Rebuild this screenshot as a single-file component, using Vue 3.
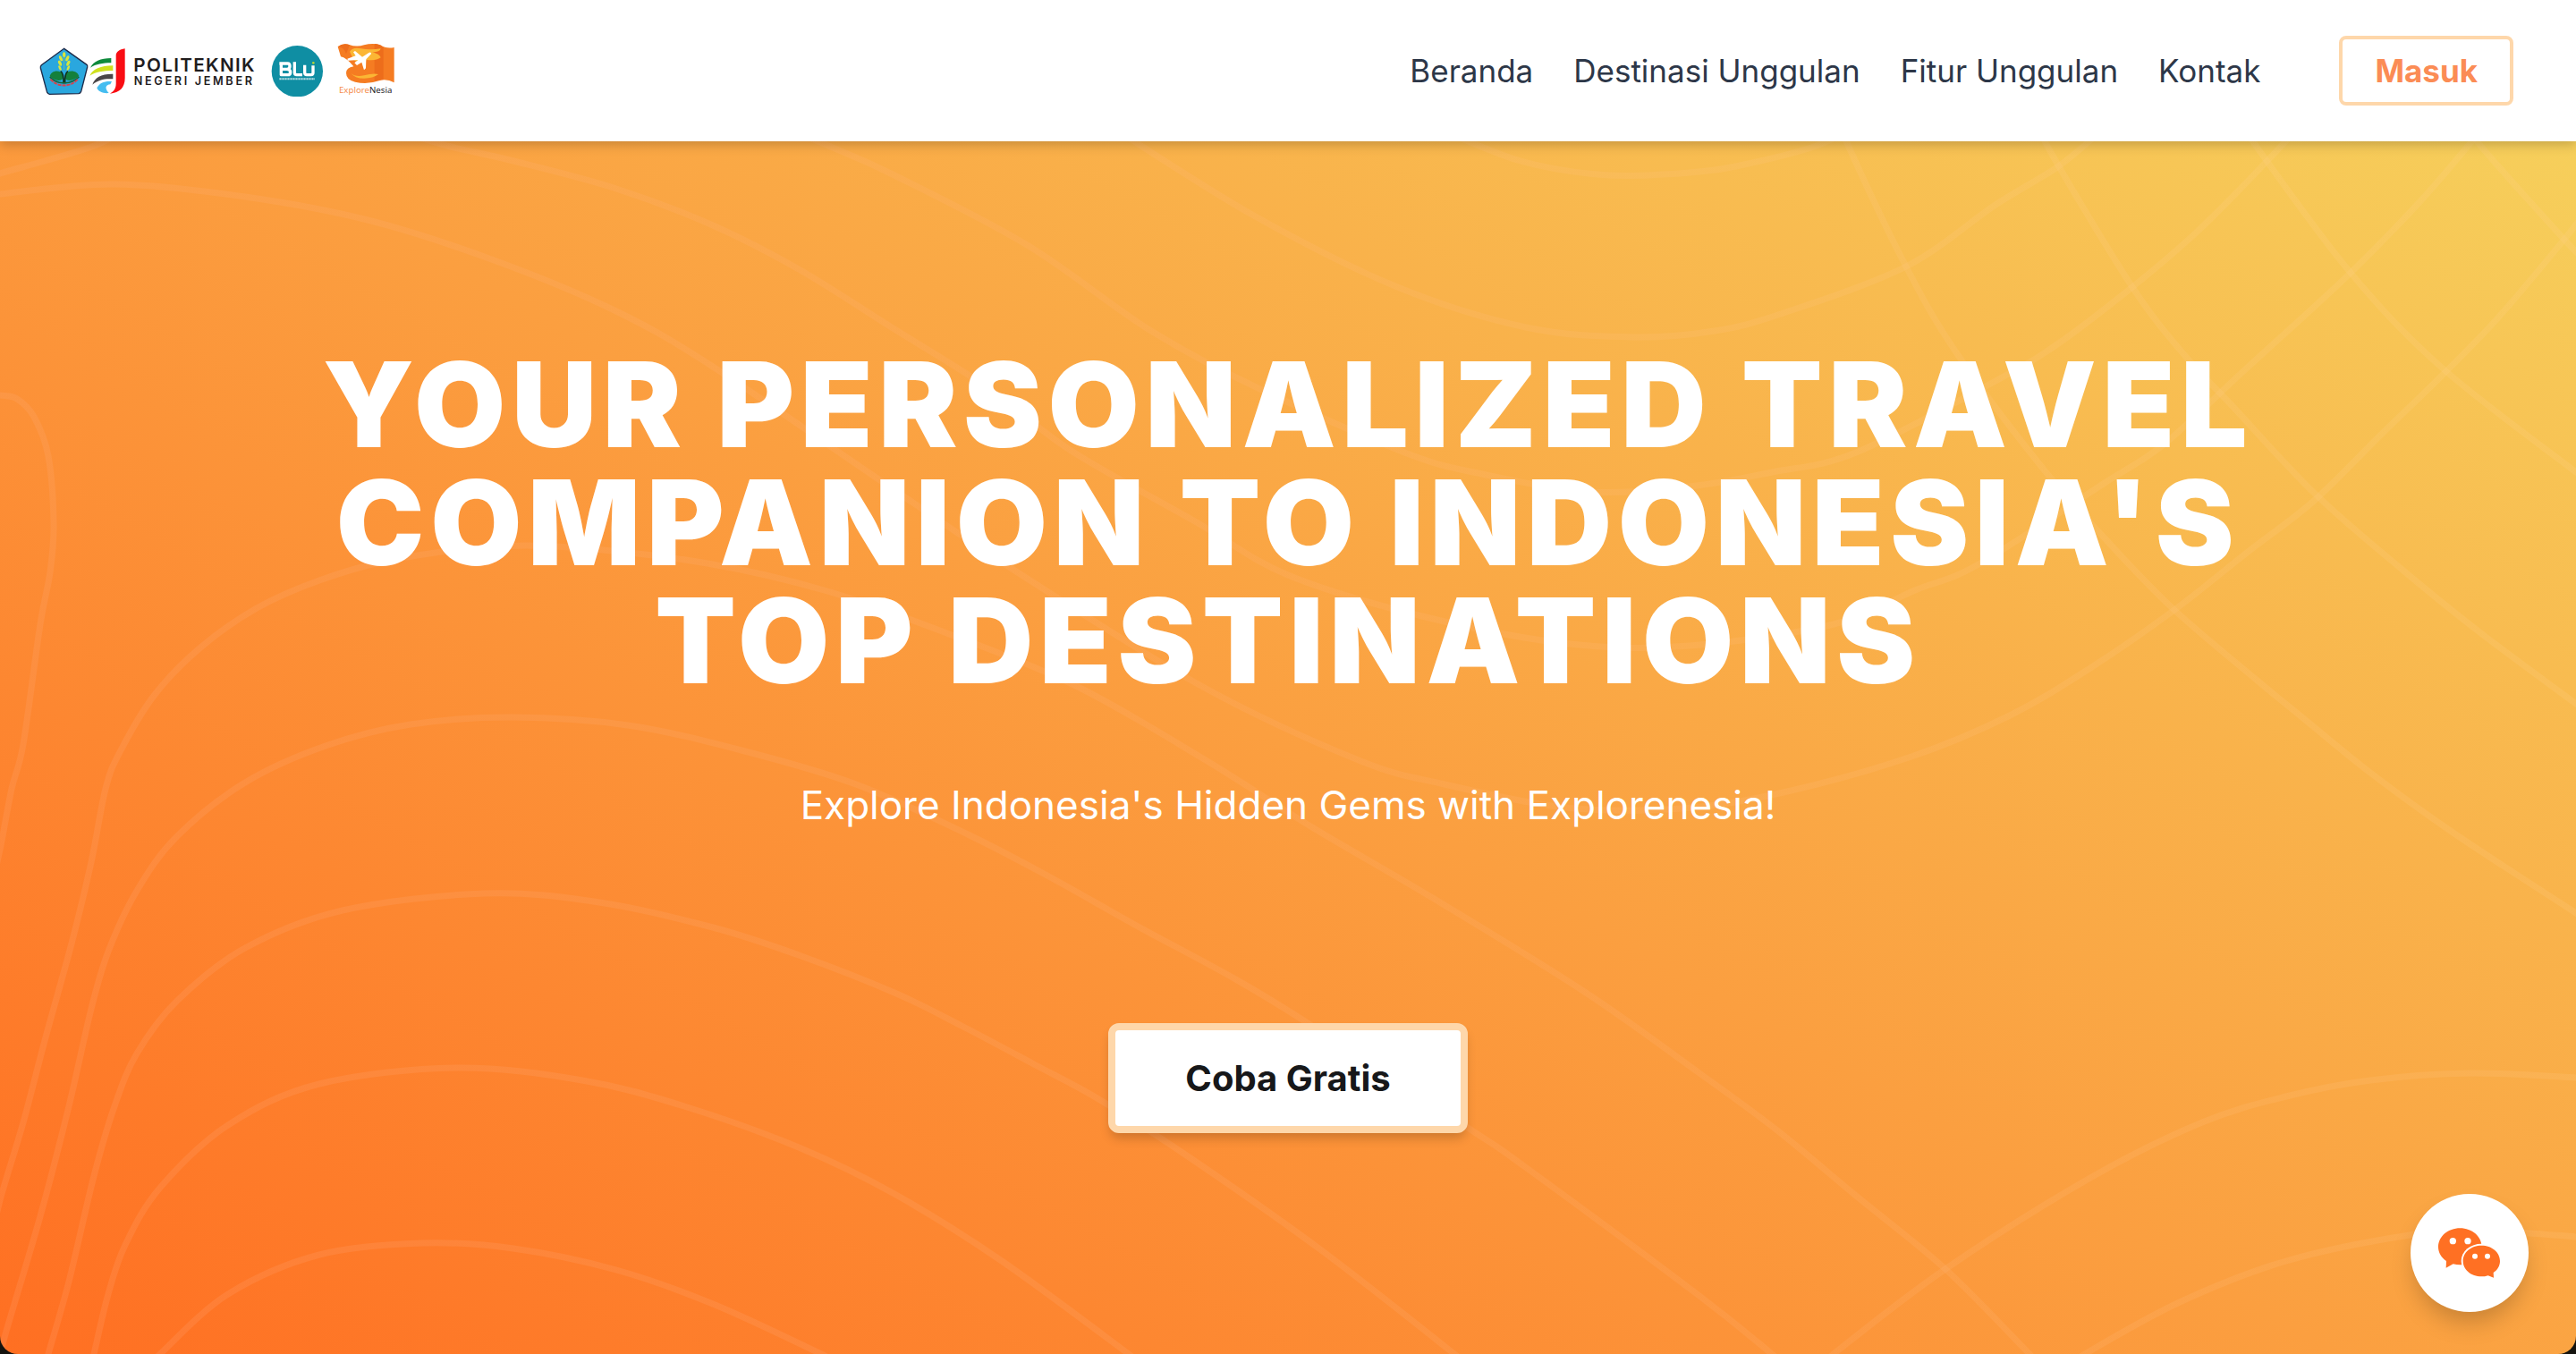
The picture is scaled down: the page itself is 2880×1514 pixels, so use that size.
<script setup>
const links = ['Beranda', 'Destinasi Unggulan', 'Fitur Unggulan', 'Kontak']

// Contour lines of the hero backdrop, as points each curve passes through.
const contours = [
  [[-20, 203], [0, 194], [50, 180], [108, 162], [150, 140]],
  [[-20, 222], [0, 217], [128, 206], [274, 220], [415, 247], [555, 292], [689, 348], [797, 410], [978, 533], [1133, 637], [1343, 767], [1519, 850], [1615, 877], [1750, 903], [1880, 904], [1994, 886], [2137, 846], [2247, 800], [2337, 747], [2431, 682], [2512, 618], [2587, 560], [2662, 486], [2731, 419], [2794, 354], [2869, 265], [2900, 225]],
  [[450, 148], [504, 164], [574, 180], [689, 211], [797, 252], [893, 301], [1000, 368], [1105, 434], [1196, 503], [1336, 583], [1440, 643], [1594, 690], [1755, 720], [1889, 722], [2050, 698], [2141, 660], [2212, 631], [2350, 542], [2419, 497], [2506, 417], [2550, 377], [2628, 305], [2706, 225], [2762, 160], [2780, 138]],
  [[890, 148], [931, 165], [1000, 196], [1150, 275], [1287, 370], [1413, 437], [1573, 507], [1657, 530], [1777, 550], [1889, 544], [1981, 528], [2075, 506], [2231, 426], [2300, 385], [2384, 321], [2450, 265], [2500, 216], [2565, 148]],
  [[1240, 140], [1400, 240], [1560, 320], [1706, 366], [1826, 377], [1917, 370], [1994, 350], [2131, 298], [2231, 229], [2300, 187], [2345, 150]],
  [[1600, 140], [1700, 180], [1800, 196], [1900, 192], [1950, 184], [2025, 165], [2070, 145]],
  [[-20, 440], [0, 442], [19, 446], [38, 466], [54, 510], [60, 586], [56, 640], [45, 698], [26, 832], [13, 882], [0, 950], [-12, 1000]],
  [[-10, 1390], [0, 1342], [26, 1255], [51, 1160], [80, 1055], [102, 964], [118, 882], [134, 841], [172, 778], [223, 725], [287, 680], [357, 649], [434, 627], [542, 612], [638, 612], [791, 630], [925, 661], [1056, 707], [1203, 767], [1348, 850], [1467, 925], [1600, 1003], [1770, 1108], [1900, 1200], [1987, 1264], [2075, 1337], [2175, 1419], [2269, 1514], [2290, 1535]],
  [[0, 1520], [6, 1492], [45, 1360], [77, 1237], [102, 1128], [121, 1064], [153, 996], [198, 935], [274, 875], [364, 834], [459, 810], [574, 802], [702, 811], [829, 839], [957, 877], [1082, 933], [1178, 983], [1267, 1033], [1378, 1093], [1459, 1142], [1644, 1263], [1704, 1304], [1900, 1449], [1981, 1514], [2000, 1530]],
  [[50, 1530], [54, 1514], [77, 1433], [105, 1315], [128, 1237], [153, 1178], [198, 1119], [274, 1060], [383, 1018], [542, 999], [670, 1009], [797, 1037], [893, 1068], [1000, 1110], [1075, 1147], [1156, 1190], [1230, 1230], [1334, 1297], [1480, 1400], [1640, 1525]],
  [[100, 1535], [105, 1514], [121, 1447], [140, 1392], [179, 1328], [255, 1258], [357, 1212], [510, 1194], [651, 1208], [765, 1237], [893, 1283], [1000, 1335], [1120, 1410], [1270, 1520]],
  [[165, 1530], [179, 1514], [255, 1447], [357, 1403], [472, 1390], [574, 1396], [689, 1420], [797, 1458], [918, 1514], [950, 1532]],
  [[2760, 140], [2775, 165], [2869, 270], [2900, 300]],
  [[2510, 140], [2525, 167], [2628, 305], [2731, 412], [2880, 528], [2900, 543]],
  [[2283, 140], [2291, 167], [2384, 321], [2444, 399], [2494, 452], [2587, 551], [2687, 638], [2775, 709], [2880, 787], [2900, 802]],
  [[2060, 140], [2066, 162], [2131, 298], [2187, 394], [2281, 520], [2356, 605], [2431, 682], [2525, 762], [2575, 803], [2650, 864], [2744, 932], [2880, 1021], [2900, 1034]],
  [[2035, 1530], [2050, 1514], [2175, 1419], [2337, 1317], [2462, 1255], [2556, 1226], [2650, 1208], [2762, 1200], [2880, 1205], [2900, 1207]],
  [[2310, 1530], [2331, 1514], [2437, 1456], [2556, 1410], [2694, 1381], [2775, 1376], [2880, 1383], [2900, 1385]],
]

// Catmull-Rom spline through the points, written as cubic Béziers.
function smooth(points) {
  let d = `M${points[0].join(' ')}`
  for (let i = 0; i < points.length - 1; i++) {
    const a = points[i - 1] ?? points[i]
    const b = points[i]
    const c = points[i + 1]
    const e = points[i + 2] ?? c
    d += `C${b[0] + (c[0] - a[0]) / 6} ${b[1] + (c[1] - a[1]) / 6} ${c[0] - (e[0] - b[0]) / 6} ${c[1] - (e[1] - b[1]) / 6} ${c[0]} ${c[1]}`
  }
  return d
}
const paths = contours.map(smooth)
</script>

<template>
  <div class="page">
    <header class="bar">
      <a class="brand" href="#" aria-label="ExploreNesia">
        <svg class="logo-polije" viewBox="40 60 732 174" role="img" aria-label="Politeknik Negeri Jember">
          <path d="M126 73 202 127Q205 130 204 135L183 217Q181 223 175 224L77 226Q71 225 69 220L47 138Q46 132 50 128Z" fill="#2aa7de" stroke="#1d2b4a" stroke-width="4" />
          <g fill="#d8e63c">
            <ellipse cx="126" cy="94" rx="5" ry="9" />
            <ellipse cx="115" cy="106" rx="5" ry="10" transform="rotate(-25 115 106)" />
            <ellipse cx="137" cy="106" rx="5" ry="10" transform="rotate(25 137 106)" />
            <ellipse cx="112" cy="122" rx="5" ry="10" transform="rotate(-25 112 122)" />
            <ellipse cx="140" cy="122" rx="5" ry="10" transform="rotate(25 140 122)" />
            <ellipse cx="112" cy="138" rx="4" ry="9" transform="rotate(-25 112 138)" />
            <ellipse cx="140" cy="138" rx="4" ry="9" transform="rotate(25 140 138)" />
          </g>
          <path d="M126 98V145" stroke="#8fcf6a" stroke-width="2" />
          <path d="M78 166C82 150 100 144 115 152 122 156 123 168 120 176 108 184 90 178 78 166ZM176 166C172 150 152 144 137 152 130 156 129 168 132 176 144 184 162 178 176 166Z" fill="#14803c" />
          <path d="M114 149Q125 156 124 187H129Q128 156 139 149" fill="none" stroke="#10331d" stroke-width="5" />
          <path d="M78 168Q100 190 126 188 152 190 176 168" fill="none" stroke="#12643a" stroke-width="5" />
          <path d="M80 176Q102 198 126 196 150 198 172 176" fill="none" stroke="#d8434d" stroke-width="6" stroke-dasharray="12 3" />
          <path d="M214 137C224 116 248 105 284 105V121C256 121 232 125 214 137Z" fill="#0f8a3c" />
          <path d="M212 164C222 142 248 130 290 130V147C258 147 230 151 212 164Z" fill="#cfe01d" />
          <path d="M221 194C228 170 252 157 290 158V175C262 173 240 178 221 194Z" fill="#4a4648" />
          <path d="M236 205C244 188 262 181 286 183L281 193C266 195 260 205 276 222 258 224 240 218 236 205Z" fill="#45bdf0" />
          <path d="M330 73V172C330 204 312 222 280 224 294 216 300 206 300 190V96C300 84 312 76 330 73Z" fill="#f90d13" />
          <text class="polije-name" x="359" y="150">POLITEKNIK</text>
          <text class="polije-town" x="360" y="194">NEGERI JEMBER</text>
        </svg>
        <svg class="logo-small" viewBox="818 60 174 174" role="img" aria-label="BLU">
          <circle cx="906" cy="149" r="86" fill="#0f8ea3" />
          <g fill="none" stroke="#fff" stroke-width="10" stroke-linejoin="round">
            <path d="M846 123H874Q881 123 881 132 881 142 872 142 883 143 883 152 883 161 874 161H852V123M852 142H872" />
            <path d="M897 118V154Q897 161 904 161H923" />
            <path d="M931 128V154Q931 161 938 161H952Q959 161 959 154V130" />
          </g>
          <circle cx="960" cy="121" r="4" fill="#b7d334" />
          <path d="M846 175H965" stroke="#b5dde3" stroke-width="6" stroke-dasharray="7 2" />
        </svg>
        <svg class="logo-nesia" viewBox="1040 50 195 188" role="img" aria-label="ExploreNesia">
          <path d="M1042 64Q1060 50 1080 57 1105 66 1130 58 1160 50 1185 58 1205 72 1231 66V184Q1205 170 1180 178 1140 192 1100 182 1070 174 1070 152 1070 134 1095 130 1070 100 1052 97Z" fill="#f57c22" />
          <path d="M1042 64Q1062 64 1070 88L1082 58Q1060 50 1042 64ZM1165 54V180Q1180 174 1195 174V66Q1180 54 1165 54Z" fill="#ed6d1b" />
          <path d="M1082 80Q1092 64 1120 70 1150 76 1186 70 1184 82 1158 82 1182 88 1186 100 1170 112 1140 108 1120 120 1100 112 1090 100 1082 80ZM1086 152Q1100 166 1130 160 1160 152 1178 156 1160 170 1130 170 1098 170 1086 152Z" fill="#fbb634" />
          <path d="M1100 78 1124 98 1146 84Q1154 80 1154 88L1137 106 1136 136 1130 142 1122 116 1106 126 1098 118 1110 108 1076 110 1074 104 1102 94 1094 82Z" fill="#fff" />
          <text class="nesia" x="1046" y="219"><tspan fill="#f58e4e">Explore</tspan><tspan fill="#26231f">Nesia</tspan></text>
        </svg>
      </a>
      <nav class="nav" aria-label="Utama">
        <a v-for="link in links" :key="link" class="link" href="#">{{ link }}</a>
        <button class="login" type="button">Masuk</button>
      </nav>
    </header>

    <main class="hero">
      <svg class="contours" viewBox="0 158 2880 1356" preserveAspectRatio="none" aria-hidden="true">
        <defs>
          <linearGradient id="contour-tint" gradientUnits="userSpaceOnUse" x1="600" y1="1514" x2="2500" y2="158">
            <stop offset="0" stop-color="#ffb28c" stop-opacity="0.16" />
            <stop offset="0.5" stop-color="#ffb47c" stop-opacity="0.17" />
            <stop offset="1" stop-color="#ffd087" stop-opacity="0.2" />
          </linearGradient>
        </defs>
        <path v-for="(d, i) in paths" :key="i" :d="d" stroke="url(#contour-tint)" />
      </svg>
      <h1 class="title">YOUR PERSONALIZED TRAVEL COMPANION TO INDONESIA'S TOP DESTINATIONS</h1>
      <p class="tagline">Explore Indonesia's Hidden Gems with Explorenesia!</p>
      <button class="cta" type="button">Coba Gratis</button>
    </main>

    <button class="chat" type="button" aria-label="Chat">
      <svg viewBox="0 0 252 198" aria-hidden="true">
        <path d="M94 16C134 16 167 44 167 79 167 114 134 139 94 139 86 139 78 138 71 136L47 149 48 126C31 115 21 98 21 79 21 44 54 16 94 16Z" fill="#ff7023" />
        <ellipse cx="166" cy="126" rx="68" ry="58" fill="#fff" />
        <path d="M166 74C201 74 228 97 228 126 228 142 220 156 206 165L207 182 188 175C181 178 173 178 166 178 131 178 104 155 104 126 104 97 131 74 166 74Z" fill="#ff7023" />
        <g fill="#fff">
          <circle cx="70" cy="59" r="11" />
          <circle cx="120" cy="59" r="11" />
          <circle cx="144" cy="110" r="9" />
          <circle cx="186" cy="110" r="9" />
        </g>
      </svg>
    </button>
  </div>
</template>

<style>
html {
  background: #16140f;
}
body {
  margin: 0;
}
</style>

<style scoped>
.page {
  display: flex;
  flex-direction: column;
  min-height: 100vh;
  overflow: hidden;
  border-radius: 0 0 20px 20px;
  font-family: Inter, "Liberation Sans", sans-serif;
}
.bar {
  position: relative;
  z-index: 1;
  display: flex;
  align-items: center;
  justify-content: space-between;
  padding: 40px 70px 40px 43px;
  background: #fff;
  box-shadow: 0 4px 12px rgba(0, 0, 0, 0.2);
}
.brand {
  display: flex;
  align-items: center;
  gap: 16px;
}
.brand svg {
  display: block;
}
.logo-polije {
  width: 244px;
  height: 58px;
}
.logo-small {
  width: 58px;
  height: 58px;
}
.logo-nesia {
  width: 65px;
  height: 64px;
}
.polije-name {
  font: 600 62px Inter, sans-serif;
  letter-spacing: 4px;
  fill: #1f1d1e;
}
.polije-town {
  font: 600 38px Inter, sans-serif;
  letter-spacing: 8px;
  fill: #1f1d1e;
}
.nesia {
  font: 400 29px "Noto Sans", sans-serif;
}
.nav {
  display: flex;
  align-items: center;
  gap: 45px;
}
.link {
  color: #2d3748;
  font-size: 35px;
  line-height: 48px;
  text-decoration: none;
}
.login {
  box-sizing: border-box;
  height: 78px;
  margin-left: 43px;
  padding: 0 36px;
  border: 4px solid #fed7aa;
  border-radius: 8px;
  background: #fff;
  color: #fb8c55;
  font: 700 35px/48px Inter, sans-serif;
}
.hero {
  position: relative;
  display: flex;
  flex: 1;
  flex-direction: column;
  align-items: center;
  padding: 228px 64px;
  background: linear-gradient(30deg, #ff6f22, #fb9f40 50%, #f6cf5b);
  color: #fff;
  text-align: center;
}
.contours {
  position: absolute;
  inset: 0;
  width: 100%;
  height: 100%;
  fill: none;
  stroke-width: 7;
}
.title {
  position: relative;
  max-width: 2288px;
  margin: 0;
  font-size: 132px;
  font-weight: 900;
  line-height: 132px;
  letter-spacing: 0.05em;
}
.tagline {
  position: relative;
  margin: 86px 0 0;
  font-size: 44px;
  line-height: 64px;
}
.cta {
  position: relative;
  box-sizing: border-box;
  height: 123px;
  margin-top: 212px;
  padding: 0 78px;
  border: 8px solid #fed7aa;
  border-radius: 12px;
  background: #fff;
  box-shadow: 0 8px 12px -2px rgba(0, 0, 0, 0.18);
  color: #17181a;
  font: 700 40px/56px Inter, sans-serif;
}
.chat {
  position: fixed;
  right: 53px;
  bottom: 47px;
  z-index: 2;
  display: grid;
  place-items: center;
  width: 132px;
  height: 132px;
  padding: 0;
  border: 0;
  border-radius: 50%;
  background: #fff;
  box-shadow: 0 16px 28px -6px rgba(0, 0, 0, 0.22);
}
.chat svg {
  width: 84px;
  height: 66px;
}
</style>
